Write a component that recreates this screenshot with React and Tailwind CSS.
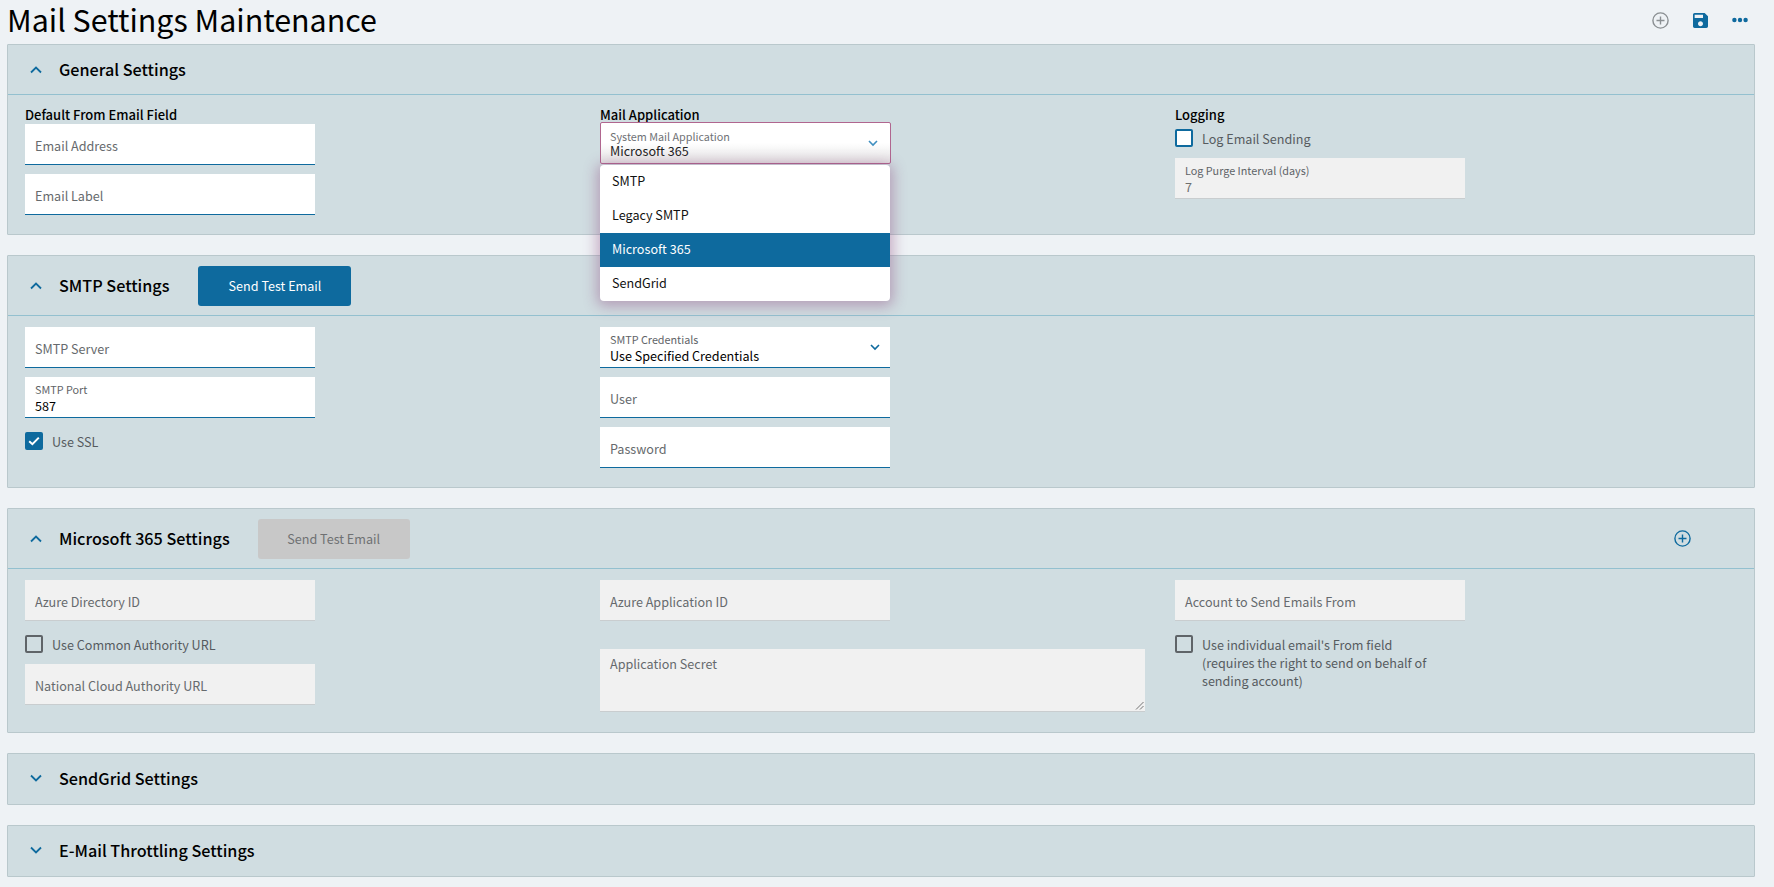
const FONT = "font-['Noto_Sans_CJK_SC','Noto_Sans',sans-serif]";

function Chevron({ up }) {
  return (
    <svg width="12" height="8" viewBox="0 0 12 8" fill="none" className="shrink-0 text-[#0e6a9e]">
      <path d={up ? "M1 6.5 6 1.5l5 5" : "M1 1.5l5 5 5-5"} stroke="currentColor" strokeWidth="1.8" />
    </svg>
  );
}

function Field({ label, value, disabled, wide }) {
  const skin = disabled ? "bg-[#f1f1f1] border-[#c9cdcf]" : "bg-white border-[#0e6a9e]";
  const width = wide ? "w-[545px]" : "w-[290px]";
  if (value) {
    return (
      <div className={`${width} ${skin} h-[41px] border-b px-[10px] pt-[5px]`}>
        <div className="text-[10.8px] leading-[14px] text-[#5f6468]">{label}</div>
        <div className={`mt-[2px] text-[12.6px] leading-[16px] ${disabled ? "text-[#6f6f6f]" : "text-black"}`}>{value}</div>
      </div>
    );
  }
  return (
    <div className={`${width} ${skin} h-[41px] border-b px-[10px] pt-[13px] text-[12.6px] leading-[18px] text-[#666a6d]`}>
      {label}
    </div>
  );
}

function Check({ state, label, children }) {
  const box =
    state === "on"
      ? "bg-[#0e6a9e] border-[#0e6a9e]"
      : state === "blue"
      ? "bg-white border-[#0e6a9e]"
      : "bg-transparent border-[#5f6468]";
  return (
    <div className="flex items-start gap-[9px]">
      <div className={`${box} flex h-[18px] w-[18px] shrink-0 items-center justify-center rounded-[2px] border-2`}>
        {state === "on" && (
          <svg width="12" height="10" viewBox="0 0 12 10" fill="none">
            <path d="M1.2 5.2 4.4 8.2 10.8 1.6" stroke="white" strokeWidth="2" />
          </svg>
        )}
      </div>
      <div className="pt-[1px] text-[12.6px] leading-[18px] text-[#565b5f]">{label}{children}</div>
    </div>
  );
}

function SendButton({ disabled }) {
  return (
    <div
      className={`${
        disabled ? "ml-[28px] w-[152px] bg-[#c8c8c8] text-[#6f7173]" : "ml-[29px] w-[153px] bg-[#0e6a9e] text-white"
      } flex h-[40px] items-center justify-center rounded-[3px] pt-[1px] text-[12.6px]`}
    >
      Send Test Email
    </div>
  );
}

function Panel({ title, open, button, right, headH, children, className }) {
  return (
    <section className={`${className} rounded-[1px] border border-[#b9c8cc] bg-[#d0dde1]`}>
      <header className={`${headH} ${open ? "border-b border-[#93c0cf]" : ""} flex items-center pl-[17px]`}>
        <div className="flex w-[34px] justify-start pl-[5px]">
          <Chevron up={open} />
        </div>
        <h2 className="pb-[1px] text-[16.2px] font-medium leading-[24px] text-black">{title}</h2>
        {button}
        {right}
      </header>
      {children}
    </section>
  );
}

const Col = ({ children }) => <div className="flex w-[575px] shrink-0 flex-col gap-[9px]">{children}</div>;
const Heading = ({ children }) => (
  <div className="h-[18px] text-[13px] font-medium leading-[18px] text-black">{children}</div>
);

export default function App() {
  return (
    <div className={`${FONT} h-[887px] overflow-hidden bg-[#eef2f5] pl-[7px] pr-[19px]`}>
      <div className="flex h-[44px] items-start justify-between">
        <h1 className="text-[30.4px] font-normal leading-[38px] text-black">Mail Settings Maintenance</h1>
        <div className="flex h-[40px] items-center gap-[24px] pr-[7px]">
          <svg width="17" height="17" viewBox="0 0 17 17" fill="none" stroke="#8a8f92" strokeWidth="1.4">
            <circle cx="8.5" cy="8.5" r="7.6" />
            <path d="M8.5 4.5v8M4.5 8.5h8" />
          </svg>
          <svg width="15" height="15" viewBox="3 3 18 18" fill="#0e6a9e">
            <path d="M17 3H5c-1.11 0-2 .9-2 2v14c0 1.1.89 2 2 2h14c1.1 0 2-.9 2-2V7l-4-4zm-5 16c-1.66 0-3-1.34-3-3s1.34-3 3-3 3 1.34 3 3-1.34 3-3 3zm3-10H5V5h10v4z" />
          </svg>
          <svg width="16" height="6" viewBox="0 0 16 6" fill="#0e6a9e">
            <circle cx="2.4" cy="3" r="2.2" />
            <circle cx="8" cy="3" r="2.2" />
            <circle cx="13.6" cy="3" r="2.2" />
          </svg>
        </div>
      </div>

      <Panel title="General Settings" open headH="h-[50px]" className="relative h-[191px]">
        <div className="flex pl-[17px] pt-[11px]">
          <div className="w-[575px] shrink-0">
            <Heading>Default From Email Field</Heading>
            <div className="flex flex-col gap-[9px]">
              <Field label="Email Address" />
              <Field label="Email Label" />
            </div>
          </div>
          <div className="w-[575px] shrink-0">
            <Heading>Mail Application</Heading>
            <div className="relative z-10 -mt-[2px] h-[42px] w-[291px] rounded-[2px] border border-[#b0668f] bg-gradient-to-b from-white via-white to-[#e4e4e4] pl-[9px] pr-[10px] pt-[6px]">
              <div className="text-[10.8px] leading-[14px] text-[#6f7276]">System Mail Application</div>
              <div className="text-[12.6px] leading-[16px] text-[#222]">Microsoft 365</div>
              <svg width="10" height="7" viewBox="0 0 10 7" fill="none" className="absolute right-[12px] top-[17px]">
                <path d="M1 1l4 4 4-4" stroke="#3f8fc0" strokeWidth="1.6" />
              </svg>
            </div>
          </div>
          <div className="flex w-[290px] flex-col">
            <Heading>Logging</Heading>
            <div className="mt-[5px]">
              <Check state="blue" label="Log Email Sending" />
            </div>
            <div className="mt-[10px]">
              <Field label="Log Purge Interval (days)" value="7" disabled />
            </div>
          </div>
        </div>
        <div className="absolute left-[592px] top-[120px] z-20 w-[290px] overflow-hidden rounded-[4px] bg-white text-[12.6px] text-[#111] shadow-[0_2px_14px_3px_rgba(140,70,125,0.42)]">
          <div className="flex h-[34px] items-center px-[12px] pb-[2px]">SMTP</div>
          <div className="flex h-[34px] items-center px-[12px] pb-[2px]">Legacy SMTP</div>
          <div className="flex h-[34px] items-center bg-[#0e6a9e] px-[12px] pb-[2px] text-white">Microsoft 365</div>
          <div className="flex h-[34px] items-center px-[12px] pb-[2px]">SendGrid</div>
        </div>
      </Panel>

      <Panel
        title="SMTP Settings"
        open
        headH="h-[60px]"
        button={<SendButton />}
        className="mt-[20px] h-[233px]"
      >
        <div className="flex pl-[17px] pt-[11px]">
          <Col>
            <Field label="SMTP Server" />
            <Field label="SMTP Port" value="587" />
            <div className="mt-[5px]">
              <Check state="on" label="Use SSL" />
            </div>
          </Col>
          <Col>
            <div className="relative">
              <Field label="SMTP Credentials" value="Use Specified Credentials" />
              <svg width="10" height="7" viewBox="0 0 10 7" fill="none" className="absolute left-[270px] top-[17px]">
                <path d="M1 1l4 4 4-4" stroke="#0e6a9e" strokeWidth="1.6" />
              </svg>
            </div>
            <Field label="User" />
            <Field label="Password" />
          </Col>
        </div>
      </Panel>

      <Panel
        title="Microsoft 365 Settings"
        open
        headH="h-[60px]"
        button={<SendButton disabled />}
        right={
          <svg width="17" height="17" viewBox="0 0 17 17" fill="none" stroke="#0e6a9e" strokeWidth="1.4" className="ml-auto mr-[63px]">
            <circle cx="8.5" cy="8.5" r="7.6" />
            <path d="M8.5 4.5v8M4.5 8.5h8" />
          </svg>
        }
        className="mt-[20px] h-[225px]"
      >
        <div className="flex pl-[17px] pt-[11px]">
          <Col>
            <Field label="Azure Directory ID" disabled />
            <div className="mt-[5px]">
              <Check state="off" label="Use Common Authority URL" />
            </div>
            <div className="mt-[1px]">
              <Field label="National Cloud Authority URL" disabled />
            </div>
          </Col>
          <Col>
            <Field label="Azure Application ID" disabled />
            <div className="relative mt-[19px] h-[63px] w-[545px] border-b border-[#c9cdcf] bg-[#f1f1f1] px-[10px] pt-[6px] text-[12.6px] leading-[18px] text-[#666a6d]">
              Application Secret
              <svg width="9" height="9" viewBox="0 0 9 9" fill="none" stroke="#555" strokeWidth="0.8" className="absolute bottom-[1px] right-[1px]">
                <path d="M1 8.5 8.5 1M5 8.5 8.5 5" />
              </svg>
            </div>
          </Col>
          <div className="flex w-[290px] flex-col gap-[14px]">
            <Field label="Account to Send Emails From" disabled />
            <Check state="off" label="Use individual email's From field">
              <br />
              (requires the right to send on behalf of
              <br />
              sending account)
            </Check>
          </div>
        </div>
      </Panel>

      <Panel title="SendGrid Settings" headH="h-[48px]" className="mt-[20px] h-[52px]" />
      <Panel title="E-Mail Throttling Settings" headH="h-[48px]" className="mt-[20px] h-[52px]" />
    </div>
  );
}
